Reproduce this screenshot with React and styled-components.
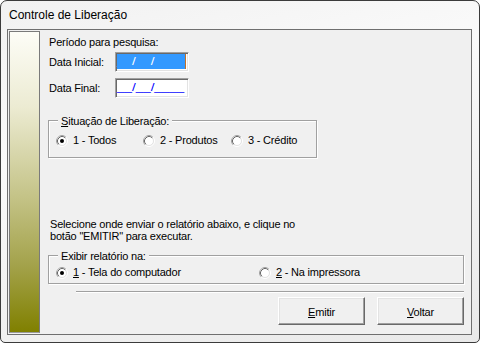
import styled, { createGlobalStyle } from "styled-components";

const GlobalStyle = createGlobalStyle`
  html, body {
    margin: 0;
    padding: 0;
    background: #fff;
  }
  body {
    font-family: "Liberation Sans", Arial, sans-serif;
    font-size: 11px;
    letter-spacing: -0.2px;
    color: #000;
  }
  * {
    box-sizing: border-box;
  }
`;

const Window = styled.div`
  width: 480px;
  height: 343px;
  border: 1px solid #3b3b3b;
  border-radius: 7px 7px 5px 5px;
  background: linear-gradient(165deg, #f1f1f1 0%, #fafafa 35%, #f3f3f3 60%, #e9e9e9 100%);
  padding: 0 7px 0 6px;
  display: flex;
  flex-direction: column;
`;

const TitleBar = styled.div`
  height: 28px;
  display: flex;
  align-items: center;
  padding-left: 2px;
  font-size: 12px;
  letter-spacing: 0;
`;

const Client = styled.div`
  width: 465px;
  height: 306px;
  border: 1px solid #6f6f6f;
  background: #f0f0f0;
  padding: 1px 0 1px 1px;
  display: flex;
`;

const SidePanel = styled.div`
  width: 31px;
  border: 1px solid #7a7a7a;
  border-bottom-color: #9a9a9a;
  background: linear-gradient(180deg, #fdfdf7 0%, #ecebd2 25%, #c4c387 55%, #a3a24a 78%, #808000 100%);
`;

const Content = styled.div`
  margin-left: 8px;
  width: 416px;
  padding-top: 5px;
  display: flex;
  flex-direction: column;
`;

const Line = styled.div`
  line-height: ${(p) => p.$lh || 13}px;
  margin-top: ${(p) => p.$mt || 0}px;
  padding-left: ${(p) => p.$pl || 0}px;
`;

const FieldRow = styled.div`
  display: flex;
  align-items: center;
  height: 20px;
  margin-top: ${(p) => p.$mt}px;
`;

const FieldLabel = styled.span`
  width: 67px;
  padding-left: 1px;
  line-height: 13px;
`;

const DateBox = styled.div`
  width: 74px;
  height: 20px;
  border: 1px solid;
  border-color: #a0a0a0 #fff #fff #a0a0a0;
  box-shadow: inset 1px 1px 0 #696969, inset -1px -1px 0 #e3e3e3;
  background: #fff;
  padding: 1px 0 0 1px;
  display: flex;
  overflow: hidden;
`;

const MaskField = styled.span`
  display: block;
  height: 15px;
  width: ${(p) => (p.$selected ? "69px" : "auto")};
  background: ${(p) => (p.$selected ? "#3399ff" : "transparent")};
  border-right: ${(p) => (p.$selected ? "1px solid #c2722a" : "none")};
`;

const MaskText = styled.span`
  display: block;
  line-height: 15px;
  letter-spacing: 0;
  white-space: pre;
  transform: scaleX(1.22);
  transform-origin: left center;
  color: ${(p) => (p.$selected ? "#3399ff" : "#0000ff")};
`;

const Slash = styled.span`
  color: ${(p) => (p.$selected ? "#fff" : "#0000ff")};
`;

const Group = styled.div`
  position: relative;
  width: ${(p) => p.$w}px;
  height: ${(p) => p.$h}px;
  margin-top: ${(p) => p.$mt}px;
  border: 1px solid #a0a0a0;
  box-shadow: inset 1px 1px 0 #fff, 1px 1px 0 #fff;
  padding: ${(p) => p.$pt}px 0 0 7px;
  display: flex;
  align-items: flex-start;
`;

const Legend = styled.span`
  position: absolute;
  top: -6px;
  left: 9px;
  padding: 0 3px;
  line-height: 13px;
  background: #f0f0f0;
`;

const RadioItem = styled.label`
  display: flex;
  align-items: center;
  gap: 5px;
  width: ${(p) => (p.$w ? `${p.$w}px` : "auto")};
  height: 13px;
  line-height: 13px;
  white-space: nowrap;
`;

const Separator = styled.div`
  margin: 7px 0 0 28px;
  height: 2px;
  border-top: 1px solid #a0a0a0;
  border-bottom: 1px solid #fff;
`;

const ButtonBar = styled.div`
  display: flex;
  justify-content: flex-end;
  gap: 12px;
  margin-top: 4px;
`;

const Button = styled.button`
  width: 87px;
  height: 28px;
  padding: 2px 0 0;
  font: inherit;
  letter-spacing: inherit;
  color: #000;
  background: #f0f0f0;
  border: 1px solid;
  border-color: #fff #696969 #696969 #fff;
  box-shadow: inset -1px -1px 0 #a0a0a0, inset 1px 1px 0 #e3e3e3;
`;

const RadioIcon = ({ checked }) => (
  <svg width="12" height="12" viewBox="0 0 12 12">
    <circle cx="6" cy="6" r="5.5" fill="none" stroke="#fff" />
    <path d="M2.11 9.89 A5.5 5.5 0 0 1 9.89 2.11" fill="none" stroke="#a0a0a0" />
    <circle cx="6" cy="6" r="4.5" fill="#fff" stroke="#e3e3e3" />
    <path d="M2.82 9.18 A4.5 4.5 0 0 1 9.18 2.82" fill="none" stroke="#696969" />
    {checked && <circle cx="6" cy="6" r="2" fill="#000" />}
  </svg>
);

const Radio = ({ checked, width, children }) => (
  <RadioItem $w={width}>
    <RadioIcon checked={checked} />
    <span>{children}</span>
  </RadioItem>
);

const DateMask = ({ selected }) => (
  <MaskField $selected={selected}>
    <MaskText $selected={selected}>
      __<Slash $selected={selected}>/</Slash>__<Slash $selected={selected}>/</Slash>____
    </MaskText>
  </MaskField>
);

const App = () => {
  return (
    <>
      <GlobalStyle />
      <Window>
        <TitleBar>Controle de Liberação</TitleBar>
        <Client>
          <SidePanel />
          <Content>
            <Line $pl={1}>Período para pesquisa:</Line>
            <FieldRow $mt={3}>
              <FieldLabel>Data Inicial:</FieldLabel>
              <DateBox>
                <DateMask selected />
              </DateBox>
            </FieldRow>
            <FieldRow $mt={6}>
              <FieldLabel>Data Final:</FieldLabel>
              <DateBox>
                <DateMask />
              </DateBox>
            </FieldRow>

            <Group $w={269} $h={38} $mt={22} $pt={13}>
              <Legend>
                <u>S</u>ituação de Liberação:
              </Legend>
              <Radio checked width={87}>1 - Todos</Radio>
              <Radio width={88}>2 - Produtos</Radio>
              <Radio>3 - Crédito</Radio>
            </Group>

            <Line $lh={12} $mt={60} $pl={2}>
              Selecione onde enviar o relatório abaixo, e clique no
              <br />
              botão "EMITIR" para executar.
            </Line>

            <Group $w={416} $h={29} $mt={13} $pt={10}>
              <Legend>Exibir relatório na:</Legend>
              <Radio checked width={203}>
                <u>1</u> - Tela do computador
              </Radio>
              <Radio>
                <u>2</u> - Na impressora
              </Radio>
            </Group>

            <Separator />

            <ButtonBar>
              <Button>
                <u>E</u>mitir
              </Button>
              <Button>
                <u>V</u>oltar
              </Button>
            </ButtonBar>
          </Content>
        </Client>
      </Window>
    </>
  );
};

export default App;
